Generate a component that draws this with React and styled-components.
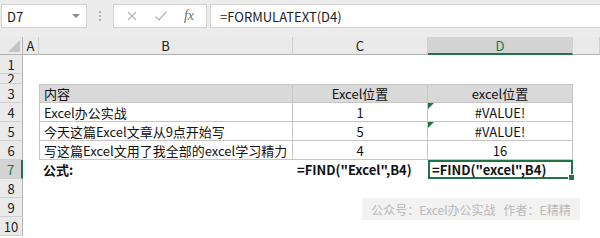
import React from 'react';
import styled, { createGlobalStyle } from 'styled-components';

const GlobalStyle = createGlobalStyle`
  body {
    margin: 0;
    background: #fff;
    font-family: "Noto Sans CJK SC", "Noto Sans", sans-serif;
  }
`;

const green = '#217346';
const line = '#c6c6c6';

const Page = styled.div`
  position: relative;
  width: 600px;
  height: 238px;
  overflow: hidden;
  background: #fff;
`;

// Formula bar
const Bar = styled.div`
  height: 37px;
  background: #ececec;
  display: flex;
  align-items: flex-start;
  padding-top: 4px;
  box-sizing: border-box;
`;

const NameBox = styled.div`
  width: 86px;
  height: 24px;
  margin-left: 1px;
  background: #fff;
  border: 1px solid #d4d4d4;
  box-sizing: border-box;
  display: flex;
  align-items: center;
  justify-content: space-between;
  padding: 0 6px 0 5px;
  font-size: 13px;
  color: #222;
`;

const Caret = styled.span`
  width: 0;
  height: 0;
  border-left: 4px solid transparent;
  border-right: 4px solid transparent;
  border-top: 4px solid #8a8a8a;
`;

const Grip = styled.div`
  width: 26px;
  height: 24px;
  display: flex;
  flex-direction: column;
  align-items: center;
  justify-content: center;
  gap: 2px;
  span {
    width: 2px;
    height: 2px;
    background: #b5b5b5;
  }
`;

const FxBox = styled.div`
  width: 94px;
  height: 24px;
  background: #fff;
  border: 1px solid #d4d4d4;
  box-sizing: border-box;
  display: flex;
  align-items: center;
  justify-content: space-around;
  padding: 0 4px;
  color: #b8b8b8;
`;

const Fx = styled.span`
  font-family: "Liberation Serif", serif;
  font-style: italic;
  font-size: 14px;
  color: #6d6d6d;
`;

const Formula = styled.div`
  flex: 1;
  height: 24px;
  margin-left: 3px;
  background: #fff;
  border: 1px solid #d4d4d4;
  border-right: none;
  box-sizing: border-box;
  display: flex;
  align-items: center;
  padding-left: 9px;
  font-size: 13px;
  color: #222;
`;

// Sheet grid
const Sheet = styled.div`
  display: grid;
  grid-template-columns: 23px 16px 254px 135px 145px 27px;
  grid-template-rows: 18px 19px 10px repeat(8, 19px);
`;

const Corner = styled.div`
  position: relative;
  background: #eaeaea;
  border-right: 1px solid #b4b4b4;
  border-bottom: 1px solid #b4b4b4;
  box-sizing: border-box;
  &::after {
    content: '';
    position: absolute;
    right: 2px;
    bottom: 2px;
    width: 0;
    height: 0;
    border-left: 12px solid transparent;
    border-bottom: 12px solid #c4c4c4;
  }
`;

const ColHead = styled.div`
  background: ${p => (p.$active ? '#d3d3d3' : '#eaeaea')};
  color: ${p => (p.$active ? green : '#222')};
  border-right: 1px solid #d0d0d0;
  border-bottom: ${p => (p.$active ? `2px solid ${green}` : '1px solid #b4b4b4')};
  box-sizing: border-box;
  display: flex;
  align-items: center;
  justify-content: center;
  font-size: 13px;
  line-height: 1;
`;

const RowHead = styled.div`
  background: ${p => (p.$active ? '#d3d3d3' : '#eaeaea')};
  color: ${p => (p.$active ? green : '#222')};
  border-right: ${p => (p.$active ? `2px solid ${green}` : '1px solid #b4b4b4')};
  border-bottom: 1px solid #d0d0d0;
  box-sizing: border-box;
  display: flex;
  align-items: center;
  justify-content: center;
  overflow: hidden;
  font-size: 13px;
  line-height: 1;
`;

const Clipped = styled.span`
  display: block;
  height: 9px;
  overflow: hidden;
  line-height: 9px;
  font-size: 13px;
`;

const Cell = styled.div`
  position: relative;
  box-sizing: border-box;
  display: flex;
  align-items: center;
  justify-content: ${p => p.$align || 'flex-start'};
  padding: 0 4px;
  font-size: 13px;
  font-weight: ${p => (p.$bold ? 700 : 400)};
  color: #111;
  white-space: nowrap;
  background: ${p => (p.$head ? '#d9d9d9' : 'transparent')};
  border-right: ${p => (p.$boxed ? `1px solid ${line}` : 'none')};
  border-bottom: ${p => (p.$boxed ? `1px solid ${line}` : 'none')};
  border-top: ${p => (p.$top ? `1px solid ${line}` : 'none')};
  border-left: ${p => (p.$left ? `1px solid ${line}` : 'none')};
`;

const Selected = styled(Cell)`
  border: 2px solid ${green};
  padding: 0 3px 0 2px;
`;

const Handle = styled.span`
  position: absolute;
  right: -4px;
  bottom: -4px;
  width: 5px;
  height: 5px;
  background: ${green};
  border: 1px solid #fff;
`;

const ErrorMark = styled.span`
  position: absolute;
  left: 0;
  top: 0;
  width: 0;
  height: 0;
  border-top: 6px solid ${green};
  border-right: 6px solid transparent;
`;

const Watermark = styled.div`
  position: absolute;
  left: 362px;
  top: 198px;
  width: 218px;
  height: 22px;
  background: rgba(241, 241, 241, 0.95);
  color: #b9b9b9;
  font-size: 12px;
  white-space: nowrap;
  display: flex;
  align-items: center;
  justify-content: center;
  gap: 8px;
`;

const rows = [
  { n: 1 },
  { n: 2 },
  { n: 3, head: true, b: '内容', c: 'Excel位置', d: 'excel位置' },
  { n: 4, b: 'Excel办公实战', c: '1', d: '#VALUE!', err: true },
  { n: 5, b: '今天这篇Excel文章从9点开始写', c: '5', d: '#VALUE!', err: true },
  { n: 6, b: '写这篇Excel文用了我全部的excel学习精力', c: '4', d: '16' },
];

export default function App() {
  return (
    <Page>
      <GlobalStyle />
      <Bar>
        <NameBox>
          D7
          <Caret />
        </NameBox>
        <Grip>
          <span />
          <span />
          <span />
        </Grip>
        <FxBox>
          <svg width="12" height="12" viewBox="0 0 12 12">
            <path d="M2 2 L10 10 M10 2 L2 10" stroke="#b8b8b8" strokeWidth="1.3" fill="none" />
          </svg>
          <svg width="14" height="12" viewBox="0 0 14 12">
            <path d="M1.5 6.5 L5 10 L12.5 1.5" stroke="#b8b8b8" strokeWidth="1.3" fill="none" />
          </svg>
          <Fx>fx</Fx>
        </FxBox>
        <Formula>=FORMULATEXT(D4)</Formula>
      </Bar>

      <Sheet>
        <Corner />
        <ColHead>A</ColHead>
        <ColHead>B</ColHead>
        <ColHead>C</ColHead>
        <ColHead $active>D</ColHead>
        <ColHead />

        {rows.map(r => {
          const table = r.n >= 3;
          return (
            <React.Fragment key={r.n}>
              <RowHead>{r.n === 2 ? <Clipped>2</Clipped> : r.n}</RowHead>
              <Cell />
              <Cell $boxed={table} $left={table} $top={r.head} $head={r.head}>
                {r.b}
              </Cell>
              <Cell $boxed={table} $top={r.head} $head={r.head} $align="center">
                {r.c}
              </Cell>
              <Cell $boxed={table} $top={r.head} $head={r.head} $align="center">
                {r.err && <ErrorMark />}
                {r.d}
              </Cell>
              <Cell />
            </React.Fragment>
          );
        })}

        <RowHead $active>7</RowHead>
        <Cell />
        <Cell $bold>公式:</Cell>
        <Cell $bold>=FIND("Excel",B4)</Cell>
        <Selected $bold>
          =FIND("excel",B4)
          <Handle />
        </Selected>
        <Cell />

        {[8, 9, 10].map(n => (
          <React.Fragment key={n}>
            <RowHead>{n}</RowHead>
            <Cell />
            <Cell />
            <Cell />
            <Cell />
            <Cell />
          </React.Fragment>
        ))}
      </Sheet>

      <Watermark>
        <span>公众号：Excel办公实战</span>
        <span>作者：E精精</span>
      </Watermark>
    </Page>
  );
}
